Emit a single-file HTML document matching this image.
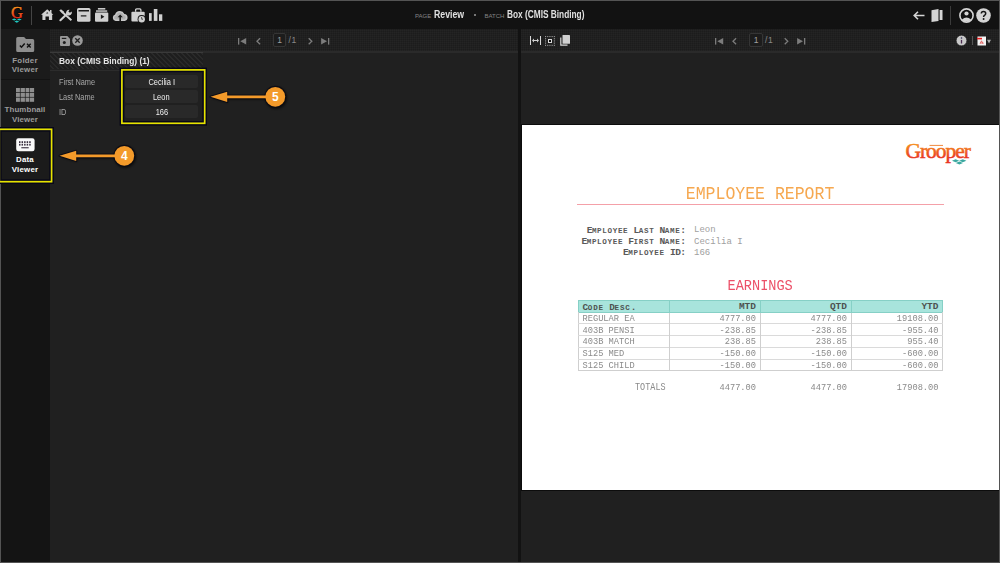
<!DOCTYPE html>
<html><head><meta charset="utf-8">
<style>
*{margin:0;padding:0;box-sizing:border-box}
html,body{width:1000px;height:563px;overflow:hidden;background:#545454}
body{font-family:"Liberation Sans",sans-serif;position:relative}
.a{position:absolute}
.t{position:absolute;white-space:nowrap;line-height:1}
.sx{display:inline-block;transform-origin:0 0}
svg{position:absolute;overflow:visible}
.tex{background-color:#1c1c1c;background-image:linear-gradient(90deg,rgba(255,255,255,.02) 1px,transparent 1px),linear-gradient(0deg,rgba(255,255,255,.02) 1px,transparent 1px);background-size:2px 2px}
.mono{font-family:"Liberation Mono",monospace}
</style></head><body>
<!-- main frames -->
<div class="a" style="left:1px;top:1px;width:998px;height:560.5px;background:#202020"></div>
<div class="a" style="left:1px;top:1px;width:998px;height:28px;background:#121212"></div>
<div class="a" style="left:1px;top:29px;width:49px;height:532.5px;background:#141414"></div>
<div class="a" style="left:1px;top:29px;width:48.5px;height:50px;background:#1b1b1b;border-top-right-radius:2px"></div>
<div class="a" style="left:1px;top:80px;width:48.5px;height:48px;background:#1b1b1b"></div>
<div class="a tex" style="left:50px;top:29px;width:468px;height:22px"></div>
<div class="a" style="left:50px;top:51px;width:468px;height:1.5px;background:#2a2a2a"></div>
<div class="a tex" style="left:521px;top:29px;width:478px;height:22px"></div>
<div class="a" style="left:521px;top:51px;width:478px;height:1.5px;background:#2a2a2a"></div>
<div class="a" style="left:518px;top:29px;width:3px;height:532.5px;background:#121212"></div>
<!-- sidebar separators -->
<div class="a" style="left:1px;top:79px;width:49px;height:1px;background:#131313"></div>

<!-- TOP BAR -->
<!-- Grooper G logo -->
<svg style="left:8px;top:4px" width="18" height="22" viewBox="0 0 18 22"><defs><linearGradient id="gg" x1="0" y1="0" x2="0" y2="1"><stop offset="0.1" stop-color="#f8a81e"/><stop offset="0.55" stop-color="#f05a20"/><stop offset="0.9" stop-color="#e42020"/></linearGradient></defs>
<text x="9" y="13.8" text-anchor="middle" font-family="Liberation Serif" font-size="16.5" fill="#000" stroke="#000" stroke-width="1.4">G</text><text x="9" y="13.8" text-anchor="middle" font-family="Liberation Serif" font-size="16.5" fill="url(#gg)" stroke="url(#gg)" stroke-width="0.45">G</text>
<path d="M3.8 15.5 L6.2 14.4 L8.6 15.5 L6.2 16.6Z M8.9 15.5 L11.3 14.4 L13.7 15.5 L11.3 16.6Z M6.4 17.6 L8.8 16.5 L11.2 17.6 L8.8 18.7Z" fill="#1ec8c0"/></svg>
<div class="a" style="left:31px;top:6px;width:1px;height:19px;background:#444"></div>
<!-- home -->
<svg style="left:41px;top:9px" width="13" height="12" viewBox="0 0 13 12"><path d="M6.2 0.2 L12.4 5.8 L11.2 5.8 L11.2 11.1 L7.9 11.1 L7.9 7.6 L4.5 7.6 L4.5 11.1 L1.4 11.1 L1.4 5.8 L0 5.8Z" fill="#d0d0d0" stroke="#000" stroke-width="0.4" paint-order="stroke"/><path d="M6.2 3 L7.3 4.6 L5.1 4.6Z" fill="#1a1a1a"/><rect x="9" y="1" width="1.5" height="3" fill="#d0d0d0"/></svg>
<!-- tools -->
<svg style="left:58.5px;top:9px" width="14" height="12" viewBox="0 0 14 12"><path d="M3.2 3 L12.4 11.2" stroke="#d0d0d0" stroke-width="1.9"/><path d="M0.3 1.6 L2 0.2 L5 2.8 L3.2 4.6Z" fill="#d0d0d0"/><path d="M1.4 11.2 L8.4 4.6" stroke="#d0d0d0" stroke-width="2.1" stroke-linecap="round"/><path d="M7.3 5 A3.1 3.1 0 0 1 10.6 0.7 L9.4 2.5 L10.9 3.8 L12.8 2.5 A3.1 3.1 0 0 1 8.6 6.2Z" fill="#d0d0d0"/></svg>
<!-- archive -->
<svg style="left:77px;top:8px" width="14" height="14" viewBox="0 0 14 14"><rect x="0" y="0" width="13.5" height="13.8" rx="1.6" fill="#d0d0d0" stroke="#000" stroke-width="0.4" paint-order="stroke"/><rect x="1.5" y="2" width="10.5" height="1.5" fill="#1a1a1a"/><rect x="3.8" y="7.3" width="5.6" height="1.2" fill="#1a1a1a"/></svg>
<!-- box play -->
<svg style="left:95px;top:8px" width="14" height="14" viewBox="0 0 14 14"><rect x="2.9" y="0" width="7.4" height="1.6" fill="#c8c8c8"/><rect x="1" y="2.3" width="11.2" height="1.5" fill="#c8c8c8"/><rect x="0" y="4.5" width="13.3" height="9.2" rx="1" fill="#d0d0d0"/><path d="M5.9 6.6 L9.4 8.8 L5.9 11Z" fill="#1a1a1a"/></svg>
<!-- cloud upload -->
<svg style="left:112px;top:9.5px" width="16" height="12" viewBox="0 0 16 12"><path d="M3.6 11 A3.3 3.3 0 0 1 3.1 4.6 A5 5 0 0 1 12.4 3.9 A3.6 3.6 0 0 1 12.7 11Z" fill="#c8c8c8"/><path d="M4 9.6 A1.9 1.9 0 0 1 4.2 5.8 A3.8 3.8 0 0 1 11.6 5.2 A2.3 2.3 0 0 1 12.4 9.6Z" fill="#b0b0b0"/><path d="M8.2 4.6 L10.8 7.2 L9 7.2 L9 11 L7.4 11 L7.4 7.2 L5.6 7.2Z" fill="#1a1a1a"/></svg>
<!-- briefcase clock -->
<svg style="left:130.5px;top:7.5px" width="15" height="15" viewBox="0 0 15 15"><path d="M4.6 3.8 V2 Q4.6 0.9 5.7 0.9 H8.8 Q9.9 0.9 9.9 2 V3.8" fill="none" stroke="#d0d0d0" stroke-width="1.3"/><rect x="0.4" y="3.8" width="13.3" height="9.6" rx="1" fill="#d0d0d0"/><circle cx="10.7" cy="11.2" r="4.1" fill="#141414"/><circle cx="10.7" cy="11.2" r="3.2" fill="#d0d0d0"/><path d="M10.5 9.3 L11.3 11.9" stroke="#1a1a1a" stroke-width="0.9" fill="none"/></svg>
<!-- bar chart -->
<svg style="left:149px;top:9px" width="14" height="12" viewBox="0 0 14 12"><rect x="0" y="4.1" width="2.7" height="7.8" fill="#d0d0d0"/><rect x="4.8" y="0" width="3.6" height="11.9" fill="#d0d0d0"/><rect x="10" y="5.3" width="3.3" height="6.6" fill="#d0d0d0"/></svg>

<!-- title -->
<div class="t" style="left:415px;top:12.5px;font-size:6px;color:#858585">PAGE</div>
<div class="t" style="left:434px;top:9.5px;font-size:10px;font-weight:bold;color:#e0e0e0"><span class="sx" style="transform:scaleX(0.875)">Review</span></div>
<div class="a" style="left:474px;top:14px;width:2px;height:2px;background:#999;border-radius:1px"></div>
<div class="t" style="left:484.5px;top:12.5px;font-size:6px;color:#858585">BATCH</div>
<div class="t" style="left:507px;top:9.5px;font-size:10px;font-weight:bold;color:#e0e0e0"><span class="sx" style="transform:scaleX(0.83)">Box (CMIS Binding)</span></div>

<!-- top right icons -->
<svg style="left:912.5px;top:11px" width="12" height="9" viewBox="0 0 12 9"><path d="M5 0.7 L1.2 4.5 L5 8.3 M1.2 4.5 H11.5" fill="none" stroke="#d4d4d4" stroke-width="1.6"/></svg>
<svg style="left:930.5px;top:8.5px" width="12" height="13" viewBox="0 0 12 13"><path d="M0.5 1.2 L7.5 0 L7.5 12 L0.5 13Z" fill="#d4d4d4"/><path d="M8.6 1 H11.5 V11 H8.6Z" fill="#d4d4d4"/></svg>
<div class="a" style="left:950px;top:6px;width:1px;height:19px;background:#3a3a3a"></div>
<svg style="left:958.5px;top:8px" width="15" height="15" viewBox="0 0 15 15"><circle cx="7.5" cy="7.5" r="6.6" fill="none" stroke="#d4d4d4" stroke-width="1.6"/><circle cx="7.5" cy="5.5" r="2.1" fill="#d4d4d4"/><path d="M3 11.5 Q7.5 7.5 12 11.5 L10.5 13 Q7.5 14 4.5 13Z" fill="#d4d4d4"/></svg>
<svg style="left:976px;top:8px" width="15" height="15" viewBox="0 0 15 15"><circle cx="7.5" cy="7.5" r="7.3" fill="#d4d4d4"/><path d="M5.3 5.6 Q5.3 3.4 7.5 3.4 Q9.7 3.4 9.7 5.4 Q9.7 6.6 8.4 7.3 Q7.6 7.8 7.6 9" fill="none" stroke="#141414" stroke-width="1.5"/><circle cx="7.6" cy="11" r="0.95" fill="#141414"/></svg>

<!-- SIDEBAR -->
<svg style="left:16px;top:37px" width="19" height="15" viewBox="0 0 19 15"><path d="M0.2 1.6 Q0.2 0.1 1.7 0.1 H7.6 Q8.4 0.1 8.9 0.8 L9.9 2.1 H16.6 Q18.2 2.1 18.2 3.6 V13.4 Q18.2 14.9 16.6 14.9 H1.7 Q0.2 14.9 0.2 13.4Z" fill="#8e8e8e"/><path d="M3.9 8.4 L5.5 10.2 L8.7 6.6" fill="none" stroke="#111" stroke-width="1.5"/><path d="M11 6.7 L14.7 10.4 M14.7 6.7 L11 10.4" stroke="#111" stroke-width="1.4"/></svg>
<div class="t" style="left:0;width:50px;text-align:center;top:55.5px;font-size:7.9px;font-weight:bold;letter-spacing:0.2px;color:#9a9a9a;line-height:9.5px">Folder<br>Viewer</div>
<svg style="left:16.2px;top:88px" width="19" height="14" viewBox="0 0 19 14" fill="#8e8e8e"><rect x="0" y="0" width="3.9" height="4.1"/><rect x="4.6" y="0" width="4.3" height="4.1"/><rect x="9.6" y="0" width="3.8" height="4.1"/><rect x="14.0" y="0" width="4.1" height="4.1"/><rect x="0" y="4.8" width="3.9" height="4.1"/><rect x="4.6" y="4.8" width="4.3" height="4.1"/><rect x="9.6" y="4.8" width="3.8" height="4.1"/><rect x="14.0" y="4.8" width="4.1" height="4.1"/><rect x="0" y="9.6" width="3.9" height="4.2"/><rect x="4.6" y="9.6" width="4.3" height="4.2"/><rect x="9.6" y="9.6" width="3.8" height="4.2"/><rect x="14.0" y="9.6" width="4.1" height="4.2"/></svg>
<div class="t" style="left:0;width:50px;text-align:center;top:105.4px;font-size:7.9px;font-weight:bold;letter-spacing:0.1px;color:#9a9a9a;line-height:9.8px">Thumbnail<br>Viewer</div>

<!-- Data viewer highlight -->
<svg style="left:-4px;top:124px" width="60" height="62" viewBox="0 0 60 62"><rect x="3.3" y="5.3" width="52.3" height="52.4" fill="#1b1b1b" stroke="#06061a" stroke-width="4.6"/><rect x="3.3" y="5.3" width="52.3" height="52.4" fill="none" stroke="#e6e300" stroke-width="1.7"/></svg>
<svg style="left:16px;top:138px" width="19" height="14" viewBox="0 0 19 14"><rect x="0.2" y="0.2" width="18.4" height="13" rx="2.2" fill="#fafafa"/><g fill="#3a3040"><rect x="3.00" y="3.2" width="1.5" height="1.8"/><rect x="5.55" y="3.2" width="1.5" height="1.8"/><rect x="8.10" y="3.2" width="1.5" height="1.8"/><rect x="10.65" y="3.2" width="1.5" height="1.8"/><rect x="13.20" y="3.2" width="1.5" height="1.8"/><rect x="3.00" y="5.8" width="1.5" height="1.8"/><rect x="5.55" y="5.8" width="1.5" height="1.8"/><rect x="8.10" y="5.8" width="1.5" height="1.8"/><rect x="10.65" y="5.8" width="1.5" height="1.8"/><rect x="13.20" y="5.8" width="1.5" height="1.8"/><rect x="5.3" y="9.2" width="7.4" height="1.1"/></g></svg>
<div class="t" style="left:0;width:50px;text-align:center;top:155.4px;font-size:7.9px;font-weight:bold;letter-spacing:0.2px;color:#ffffff;line-height:9.9px">Data<br>Viewer</div>

<!-- LEFT PANEL toolbar -->
<svg style="left:60px;top:36px" width="10" height="10" viewBox="0 0 10 10"><path d="M0 1 Q0 0 1 0 H7.3 L10 2.7 V9 Q10 10 9 10 H1 Q0 10 0 9Z" fill="#9a9a9a"/><rect x="1.8" y="1.8" width="4.5" height="1.2" fill="#1e1e1e"/><circle cx="4.3" cy="6.4" r="1.5" fill="#1e1e1e"/></svg>
<svg style="left:72px;top:35px" width="11" height="11" viewBox="0 0 11 11"><circle cx="5.5" cy="5.5" r="5.3" fill="#9a9a9a"/><path d="M3.3 3.3 L7.7 7.7 M7.7 3.3 L3.3 7.7" stroke="#1e1e1e" stroke-width="1.3"/></svg>
<!-- pager left -->
<svg style="left:238.3px;top:37.7px" width="8.5" height="7" viewBox="0 0 8.5 7"><rect x="0" y="0" width="1.3" height="6.6" fill="#7c7c7c"/><path d="M8.2 0 L2.3 3.3 L8.2 6.6Z" fill="#7c7c7c"/></svg>
<svg style="left:255.6px;top:37.7px" width="5" height="7" viewBox="0 0 5 7"><path d="M4.1 0.3 L1 3.3 L4.1 6.3" fill="none" stroke="#7c7c7c" stroke-width="1.3"/></svg>
<div class="a" style="left:272.6px;top:33.4px;width:13.8px;height:13.6px;border:1px solid #353535;border-radius:2px;background:#1c1c1c"></div>
<div class="t" style="left:277.3px;top:36px;font-size:8.5px;color:#a0a0a0">1</div>
<div class="t" style="left:288.5px;top:36px;font-size:8.5px;color:#8a8a8a;letter-spacing:0.6px">/1</div>
<svg style="left:307.8px;top:37.7px" width="5" height="7" viewBox="0 0 5 7"><path d="M0.7 0.3 L3.8 3.3 L0.7 6.3" fill="none" stroke="#7c7c7c" stroke-width="1.3"/></svg>
<svg style="left:320.9px;top:37.7px" width="8.5" height="7" viewBox="0 0 8.5 7"><rect x="7" y="0" width="1.3" height="6.6" fill="#7c7c7c"/><path d="M0.1 0 L6 3.3 L0.1 6.6Z" fill="#7c7c7c"/></svg>

<!-- header row -->
<div class="a" style="left:50px;top:52px;width:153px;height:1px;background:#3a3a3a"></div>
<div class="a" style="left:50px;top:53px;width:153px;height:16px;background:repeating-linear-gradient(45deg,#1e1e1e 0 2px,#292929 2px 3.5px)"></div>
<div class="a" style="left:50px;top:70px;width:70px;height:1px;background:#2c2c2c"></div>
<div class="t" style="left:58.5px;top:56.5px;font-size:9.3px;font-weight:bold;color:#e6e6e6"><span class="sx" style="transform:scaleX(0.9)">Box (CMIS Binding) (1)</span></div>

<!-- fields -->
<div class="t" style="left:58.5px;top:77.5px;font-size:8.3px;color:#a8a8a8"><span class="sx" style="transform:scaleX(0.89)">First Name</span></div>
<div class="t" style="left:58.5px;top:92.5px;font-size:8.3px;color:#a8a8a8"><span class="sx" style="transform:scaleX(0.89)">Last Name</span></div>
<div class="t" style="left:58.5px;top:107.5px;font-size:8.3px;color:#a8a8a8"><span class="sx" style="transform:scaleX(0.89)">ID</span></div>
<div class="a" style="left:125px;top:74.6px;width:72.6px;height:13.6px;background:#292929;border-radius:2px"></div>
<div class="a" style="left:125px;top:89.8px;width:72.6px;height:13.6px;background:#292929;border-radius:2px"></div>
<div class="a" style="left:125px;top:104.8px;width:72.6px;height:13.6px;background:#292929;border-radius:2px"></div>
<div class="t" style="left:124.5px;width:74px;text-align:center;top:77.5px;font-size:8.3px;color:#f0f0f0"><span class="sx" style="transform:scaleX(0.9);transform-origin:50% 0">Cecilia I</span></div>
<div class="t" style="left:124.5px;width:74px;text-align:center;top:92.5px;font-size:8.3px;color:#f0f0f0"><span class="sx" style="transform:scaleX(0.9);transform-origin:50% 0">Leon</span></div>
<div class="t" style="left:124.5px;width:74px;text-align:center;top:107.5px;font-size:8.3px;color:#f0f0f0"><span class="sx" style="transform:scaleX(0.9);transform-origin:50% 0">166</span></div>
<!-- yellow box 5 -->
<svg style="left:117px;top:65px" width="93" height="63" viewBox="0 0 93 63"><rect x="4.9" y="4.9" width="82.8" height="53.4" fill="none" stroke="#06061a" stroke-width="4.6"/><rect x="4.9" y="4.9" width="82.8" height="53.4" fill="none" stroke="#e6e300" stroke-width="1.7"/></svg>
<!-- callout 5 -->
<svg style="left:205px;top:84.1px" width="90" height="30" viewBox="0 0 90 30">
 <defs><filter id="bl5" x="-20%" y="-60%" width="140%" height="220%"><feGaussianBlur stdDeviation="1.2"/></filter></defs>
 <g transform="translate(0.8,1.2)" fill="#000" opacity="0.6" filter="url(#bl5)"><path d="M5.5 12.8 L22.2 7.7 L22.2 11.5 L62 11.5 L62 14.2 L22.2 14.2 L22.2 17.9Z"/><circle cx="70.3" cy="12.8" r="11"/></g>
 <g fill="#0a0a14" stroke="#0a0a14" stroke-width="2" stroke-linejoin="round" opacity="0.85"><path d="M5.5 12.8 L22.2 7.7 L22.2 11.5 L62 11.5 L62 14.2 L22.2 14.2 L22.2 17.9Z"/><circle cx="70.3" cy="12.8" r="10"/></g>
 <path d="M5.5 12.8 L22.2 7.7 L22.2 11.5 L62 11.5 L62 14.2 L22.2 14.2 L22.2 17.9Z" fill="#f39a2a"/>
 <circle cx="70.3" cy="12.8" r="9.9" fill="#f39a2a"/>
 <text x="70.3" y="17.1" text-anchor="middle" font-family="Liberation Sans" font-weight="bold" font-size="12" fill="#fff">5</text>
</svg>
<!-- callout 4 -->
<svg style="left:53.5px;top:142.7px" width="90" height="30" viewBox="0 0 90 30">
 <defs><filter id="bl4" x="-20%" y="-60%" width="140%" height="220%"><feGaussianBlur stdDeviation="1.2"/></filter></defs>
 <g transform="translate(0.8,1.2)" fill="#000" opacity="0.6" filter="url(#bl4)"><path d="M5.5 12.8 L22.2 7.7 L22.2 11.5 L62 11.5 L62 14.2 L22.2 14.2 L22.2 17.9Z"/><circle cx="70.3" cy="12.8" r="11"/></g>
 <g fill="#0a0a14" stroke="#0a0a14" stroke-width="2" stroke-linejoin="round" opacity="0.85"><path d="M5.5 12.8 L22.2 7.7 L22.2 11.5 L62 11.5 L62 14.2 L22.2 14.2 L22.2 17.9Z"/><circle cx="70.3" cy="12.8" r="10"/></g>
 <path d="M5.5 12.8 L22.2 7.7 L22.2 11.5 L62 11.5 L62 14.2 L22.2 14.2 L22.2 17.9Z" fill="#f39a2a"/>
 <circle cx="70.3" cy="12.8" r="9.9" fill="#f39a2a"/>
 <text x="70.3" y="17.1" text-anchor="middle" font-family="Liberation Sans" font-weight="bold" font-size="12" fill="#fff">4</text>
</svg>
<!-- RIGHT PANEL toolbar -->
<svg style="left:530px;top:36px" width="12" height="9" viewBox="0 0 12 9"><rect x="0" y="0" width="1" height="9" fill="#d8d8d8"/><rect x="10" y="0" width="1" height="9" fill="#d8d8d8"/><path d="M2 4.5 L4 2.6 V4 H7 V2.6 L9 4.5 L7 6.4 V5 H4 V6.4Z" fill="#d0d0d0"/></svg>
<svg style="left:545px;top:36px" width="10" height="10" viewBox="0 0 10 10"><g fill="#9a9a9a"><rect x="0" y="0" width="1.1" height="1.1"/><rect x="0" y="8.8" width="1.1" height="1.1"/><rect x="2.2" y="0" width="1.1" height="1.1"/><rect x="2.2" y="8.8" width="1.1" height="1.1"/><rect x="4.4" y="0" width="1.1" height="1.1"/><rect x="4.4" y="8.8" width="1.1" height="1.1"/><rect x="6.6" y="0" width="1.1" height="1.1"/><rect x="6.6" y="8.8" width="1.1" height="1.1"/><rect x="8.8" y="0" width="1.1" height="1.1"/><rect x="8.8" y="8.8" width="1.1" height="1.1"/><rect x="0" y="2.2" width="1.1" height="1.1"/><rect x="8.8" y="2.2" width="1.1" height="1.1"/><rect x="0" y="4.4" width="1.1" height="1.1"/><rect x="8.8" y="4.4" width="1.1" height="1.1"/><rect x="0" y="6.6" width="1.1" height="1.1"/><rect x="8.8" y="6.6" width="1.1" height="1.1"/></g><rect x="3.5" y="3.5" width="3" height="3" fill="#0e0e0e" stroke="#d8d8d8" stroke-width="1"/></svg>
<svg style="left:560px;top:35px" width="10" height="11" viewBox="0 0 10 11"><path d="M0.8 2.5 V10.2 H7.5" fill="none" stroke="#d8d8d8" stroke-width="1.2"/><rect x="2.5" y="0" width="7.5" height="8.8" rx="0.6" fill="#d0d0d0"/></svg>
<!-- pager right -->
<svg style="left:714.8px;top:37.7px" width="8.5" height="7" viewBox="0 0 8.5 7"><rect x="0" y="0" width="1.3" height="6.6" fill="#7c7c7c"/><path d="M8.2 0 L2.3 3.3 L8.2 6.6Z" fill="#7c7c7c"/></svg>
<svg style="left:732.1px;top:37.7px" width="5" height="7" viewBox="0 0 5 7"><path d="M4.1 0.3 L1 3.3 L4.1 6.3" fill="none" stroke="#7c7c7c" stroke-width="1.3"/></svg>
<div class="a" style="left:749.1px;top:33.4px;width:13.8px;height:13.6px;border:1px solid #353535;border-radius:2px;background:#1c1c1c"></div>
<div class="t" style="left:753.8px;top:36px;font-size:8.5px;color:#a0a0a0">1</div>
<div class="t" style="left:765.0px;top:36px;font-size:8.5px;color:#8a8a8a;letter-spacing:0.6px">/1</div>
<svg style="left:784.3px;top:37.7px" width="5" height="7" viewBox="0 0 5 7"><path d="M0.7 0.3 L3.8 3.3 L0.7 6.3" fill="none" stroke="#7c7c7c" stroke-width="1.3"/></svg>
<svg style="left:797.4px;top:37.7px" width="8.5" height="7" viewBox="0 0 8.5 7"><rect x="7" y="0" width="1.3" height="6.6" fill="#7c7c7c"/><path d="M0.1 0 L6 3.3 L0.1 6.6Z" fill="#7c7c7c"/></svg>

<!-- info / pdf -->
<svg style="left:955.5px;top:35px" width="11" height="11" viewBox="0 0 11 11"><circle cx="5.5" cy="5.5" r="5.3" fill="#c8c8c8" stroke="#0a0a0a" stroke-width="0.5"/><circle cx="5.5" cy="3" r="0.8" fill="#2a2a50"/><rect x="4.85" y="4.9" width="1.3" height="3.6" fill="#4a2a50"/></svg>
<div class="a" style="left:971.5px;top:36px;width:1px;height:9px;background:#555"></div>
<svg style="left:977px;top:35.5px" width="15" height="10" viewBox="0 0 15 10"><rect x="0.5" y="0.5" width="8.5" height="9" fill="#f4f4f4"/><rect x="0" y="1.8" width="5" height="1.6" fill="#e82020"/><path d="M3 7.8 L4.5 4.8 L6 7.8 M3.3 7 H6.5" fill="none" stroke="#e04040" stroke-width="0.7"/><path d="M10 3.8 L14 3.8 L12 7.4Z" fill="#aaa"/></svg>

<!-- DOCUMENT PAGE -->
<div class="a" style="left:521px;top:124px;width:478px;height:367px;background:#0c0c0c"></div>
<div class="a" style="left:522px;top:125px;width:477px;height:365px;background:#ffffff"></div>
<!-- Grooper logo -->
<svg style="left:900px;top:136px" width="80" height="32" viewBox="0 0 80 32"><defs><linearGradient id="lg" x1="0" y1="0" x2="0" y2="1"><stop offset="0.2" stop-color="#f59020"/><stop offset="0.8" stop-color="#e83422"/></linearGradient></defs>
<text x="5.4" y="22.2" font-family="Liberation Serif" font-size="21.5" letter-spacing="-1.0" fill="url(#lg)" stroke="url(#lg)" stroke-width="0.55">Grooper</text>
<rect x="29.5" y="8.9" width="13.5" height="1" fill="#f08a40"/>
<path d="M52 24.8 L55.6 23.2 L59.2 24.8 L55.6 26.2Z M59.2 24.8 L62.8 23.2 L66.4 24.8 L62.8 26.2Z M55.8 27 L59.4 25.5 L63 27 L59.4 28.5Z" fill="#3aa8a0"/></svg>
<div class="t mono" style="left:685.8px;top:185.6px;font-size:16.5px;color:#f6a850;transform:scaleY(1.1);transform-origin:0 0">EMPLOYEE REPORT</div>
<div class="a" style="left:577px;top:204px;width:367px;height:1.3px;background:#f4a0a8"></div>

<!-- employee info labels -->
<div class="t mono" style="left:586.7px;top:224.9px;font-weight:bold;color:#5a5a5a;line-height:9px"><span style="font-size:9.6px;letter-spacing:-0.56px">E</span><span style="font-size:7.6px;letter-spacing:0.64px">M</span><span style="font-size:7.6px;letter-spacing:0.64px">P</span><span style="font-size:7.6px;letter-spacing:0.64px">L</span><span style="font-size:7.6px;letter-spacing:0.64px">O</span><span style="font-size:7.6px;letter-spacing:0.64px">Y</span><span style="font-size:7.6px;letter-spacing:0.64px">E</span><span style="font-size:7.6px;letter-spacing:0.64px">E</span><span style="font-size:9.6px;letter-spacing:-0.56px"> </span><span style="font-size:9.6px;letter-spacing:-0.56px">L</span><span style="font-size:7.6px;letter-spacing:0.64px">A</span><span style="font-size:7.6px;letter-spacing:0.64px">S</span><span style="font-size:7.6px;letter-spacing:0.64px">T</span><span style="font-size:9.6px;letter-spacing:-0.56px"> </span><span style="font-size:9.6px;letter-spacing:-0.56px">N</span><span style="font-size:7.6px;letter-spacing:0.64px">A</span><span style="font-size:7.6px;letter-spacing:0.64px">M</span><span style="font-size:7.6px;letter-spacing:0.64px">E</span><span style="font-size:9.6px;letter-spacing:-0.56px">:</span></div>
<div class="t mono" style="left:581.5px;top:236.1px;font-weight:bold;color:#5a5a5a;line-height:9px"><span style="font-size:9.6px;letter-spacing:-0.56px">E</span><span style="font-size:7.6px;letter-spacing:0.64px">M</span><span style="font-size:7.6px;letter-spacing:0.64px">P</span><span style="font-size:7.6px;letter-spacing:0.64px">L</span><span style="font-size:7.6px;letter-spacing:0.64px">O</span><span style="font-size:7.6px;letter-spacing:0.64px">Y</span><span style="font-size:7.6px;letter-spacing:0.64px">E</span><span style="font-size:7.6px;letter-spacing:0.64px">E</span><span style="font-size:9.6px;letter-spacing:-0.56px"> </span><span style="font-size:9.6px;letter-spacing:-0.56px">F</span><span style="font-size:7.6px;letter-spacing:0.64px">I</span><span style="font-size:7.6px;letter-spacing:0.64px">R</span><span style="font-size:7.6px;letter-spacing:0.64px">S</span><span style="font-size:7.6px;letter-spacing:0.64px">T</span><span style="font-size:9.6px;letter-spacing:-0.56px"> </span><span style="font-size:9.6px;letter-spacing:-0.56px">N</span><span style="font-size:7.6px;letter-spacing:0.64px">A</span><span style="font-size:7.6px;letter-spacing:0.64px">M</span><span style="font-size:7.6px;letter-spacing:0.64px">E</span><span style="font-size:9.6px;letter-spacing:-0.56px">:</span></div>
<div class="t mono" style="left:623.1px;top:247.3px;font-weight:bold;color:#5a5a5a;line-height:9px"><span style="font-size:9.6px;letter-spacing:-0.56px">E</span><span style="font-size:7.6px;letter-spacing:0.64px">M</span><span style="font-size:7.6px;letter-spacing:0.64px">P</span><span style="font-size:7.6px;letter-spacing:0.64px">L</span><span style="font-size:7.6px;letter-spacing:0.64px">O</span><span style="font-size:7.6px;letter-spacing:0.64px">Y</span><span style="font-size:7.6px;letter-spacing:0.64px">E</span><span style="font-size:7.6px;letter-spacing:0.64px">E</span><span style="font-size:9.6px;letter-spacing:-0.56px"> </span><span style="font-size:9.6px;letter-spacing:-0.56px">I</span><span style="font-size:9.6px;letter-spacing:-0.56px">D</span><span style="font-size:9.6px;letter-spacing:-0.56px">:</span></div>
<div class="t mono" style="left:694px;top:225.4px;font-size:9px;color:#a0a0a0;line-height:11.3px">Leon<br>Cecilia I<br>166</div>

<div class="t mono" style="left:727.5px;top:279.1px;font-size:13.6px;color:#ec5068;transform:scaleY(1.05);transform-origin:0 0">EARNINGS</div>

<!-- table -->
<div class="a" style="left:578px;top:300px;width:365px;height:12.5px;background:#a8e4dc;border:1px solid #86d0c6"></div>
<div class="a" style="left:578px;top:312px;width:365px;height:59px;border:1px solid #cfcfcf;border-top:none"></div>
<div class="a" style="left:578px;top:323px;width:365px;height:1px;background:#dadada"></div>
<div class="a" style="left:578px;top:335px;width:365px;height:1px;background:#dadada"></div>
<div class="a" style="left:578px;top:347px;width:365px;height:1px;background:#dadada"></div>
<div class="a" style="left:578px;top:359px;width:365px;height:1px;background:#dadada"></div>
<div class="a" style="left:669px;top:300px;width:1px;height:71px;background:#cfcfcf"></div>
<div class="a" style="left:760px;top:300px;width:1px;height:71px;background:#cfcfcf"></div>
<div class="a" style="left:851px;top:300px;width:1px;height:71px;background:#cfcfcf"></div>
<div class="a" style="left:669px;top:300px;width:1px;height:12.5px;background:#86d0c6"></div>
<div class="a" style="left:760px;top:300px;width:1px;height:12.5px;background:#86d0c6"></div>
<div class="a" style="left:851px;top:300px;width:1px;height:12.5px;background:#86d0c6"></div>

<div class="t mono" style="left:582.5px;top:302px;font-weight:bold;color:#4e5250;line-height:9px"><span style="font-size:9.4px;letter-spacing:-0.29px">C</span><span style="font-size:7.6px;letter-spacing:0.79px">O</span><span style="font-size:7.6px;letter-spacing:0.79px">D</span><span style="font-size:7.6px;letter-spacing:0.79px">E</span><span style="font-size:9.4px;letter-spacing:-0.29px"> </span><span style="font-size:9.4px;letter-spacing:-0.29px">D</span><span style="font-size:7.6px;letter-spacing:0.79px">E</span><span style="font-size:7.6px;letter-spacing:0.79px">S</span><span style="font-size:7.6px;letter-spacing:0.79px">C</span><span style="font-size:9.4px;letter-spacing:-0.29px">.</span></div>
<div class="t mono" style="left:660px;width:96px;text-align:right;top:302px;font-size:9.5px;font-weight:bold;color:#4e5250">MTD</div>
<div class="t mono" style="left:751px;width:96px;text-align:right;top:302px;font-size:9.5px;font-weight:bold;color:#4e5250">QTD</div>
<div class="t mono" style="left:842px;width:96.5px;text-align:right;top:302px;font-size:9.5px;font-weight:bold;color:#4e5250">YTD</div>

<div class="t mono" style="left:582.5px;top:314.00px;font-size:8.7px;color:#8a8a8a;transform:scaleY(1.1);transform-origin:0 0">REGULAR EA</div>
<div class="t mono" style="left:600px;width:156px;text-align:right;top:314.00px;font-size:8.7px;color:#8a8a8a;transform:scaleY(1.1);transform-origin:0 0">4777.00</div>
<div class="t mono" style="left:691px;width:156px;text-align:right;top:314.00px;font-size:8.7px;color:#8a8a8a;transform:scaleY(1.1);transform-origin:0 0">4777.00</div>
<div class="t mono" style="left:782px;width:156.5px;text-align:right;top:314.00px;font-size:8.7px;color:#8a8a8a;transform:scaleY(1.1);transform-origin:0 0">19108.00</div>
<div class="t mono" style="left:582.5px;top:325.70px;font-size:8.7px;color:#8a8a8a;transform:scaleY(1.1);transform-origin:0 0">403B PENSI</div>
<div class="t mono" style="left:600px;width:156px;text-align:right;top:325.70px;font-size:8.7px;color:#8a8a8a;transform:scaleY(1.1);transform-origin:0 0">-238.85</div>
<div class="t mono" style="left:691px;width:156px;text-align:right;top:325.70px;font-size:8.7px;color:#8a8a8a;transform:scaleY(1.1);transform-origin:0 0">-238.85</div>
<div class="t mono" style="left:782px;width:156.5px;text-align:right;top:325.70px;font-size:8.7px;color:#8a8a8a;transform:scaleY(1.1);transform-origin:0 0">-955.40</div>
<div class="t mono" style="left:582.5px;top:337.40px;font-size:8.7px;color:#8a8a8a;transform:scaleY(1.1);transform-origin:0 0">403B MATCH</div>
<div class="t mono" style="left:600px;width:156px;text-align:right;top:337.40px;font-size:8.7px;color:#8a8a8a;transform:scaleY(1.1);transform-origin:0 0">238.85</div>
<div class="t mono" style="left:691px;width:156px;text-align:right;top:337.40px;font-size:8.7px;color:#8a8a8a;transform:scaleY(1.1);transform-origin:0 0">238.85</div>
<div class="t mono" style="left:782px;width:156.5px;text-align:right;top:337.40px;font-size:8.7px;color:#8a8a8a;transform:scaleY(1.1);transform-origin:0 0">955.40</div>
<div class="t mono" style="left:582.5px;top:349.10px;font-size:8.7px;color:#8a8a8a;transform:scaleY(1.1);transform-origin:0 0">S125 MED</div>
<div class="t mono" style="left:600px;width:156px;text-align:right;top:349.10px;font-size:8.7px;color:#8a8a8a;transform:scaleY(1.1);transform-origin:0 0">-150.00</div>
<div class="t mono" style="left:691px;width:156px;text-align:right;top:349.10px;font-size:8.7px;color:#8a8a8a;transform:scaleY(1.1);transform-origin:0 0">-150.00</div>
<div class="t mono" style="left:782px;width:156.5px;text-align:right;top:349.10px;font-size:8.7px;color:#8a8a8a;transform:scaleY(1.1);transform-origin:0 0">-600.00</div>
<div class="t mono" style="left:582.5px;top:360.80px;font-size:8.7px;color:#8a8a8a;transform:scaleY(1.1);transform-origin:0 0">S125 CHILD</div>
<div class="t mono" style="left:600px;width:156px;text-align:right;top:360.80px;font-size:8.7px;color:#8a8a8a;transform:scaleY(1.1);transform-origin:0 0">-150.00</div>
<div class="t mono" style="left:691px;width:156px;text-align:right;top:360.80px;font-size:8.7px;color:#8a8a8a;transform:scaleY(1.1);transform-origin:0 0">-150.00</div>
<div class="t mono" style="left:782px;width:156.5px;text-align:right;top:360.80px;font-size:8.7px;color:#8a8a8a;transform:scaleY(1.1);transform-origin:0 0">-600.00</div>
<div class="t mono" style="left:635px;top:383.4px;font-size:8.5px;color:#8a8a8a;transform:scaleY(1.2);transform-origin:0 0">TOTALS</div>
<div class="t mono" style="left:600px;width:156px;text-align:right;top:383.4px;font-size:8.7px;color:#8a8a8a;transform:scaleY(1.1);transform-origin:0 0">4477.00</div>
<div class="t mono" style="left:691px;width:156px;text-align:right;top:383.4px;font-size:8.7px;color:#8a8a8a;transform:scaleY(1.1);transform-origin:0 0">4477.00</div>
<div class="t mono" style="left:782px;width:156.5px;text-align:right;top:383.4px;font-size:8.7px;color:#8a8a8a;transform:scaleY(1.1);transform-origin:0 0">17908.00</div>
</body></html>
